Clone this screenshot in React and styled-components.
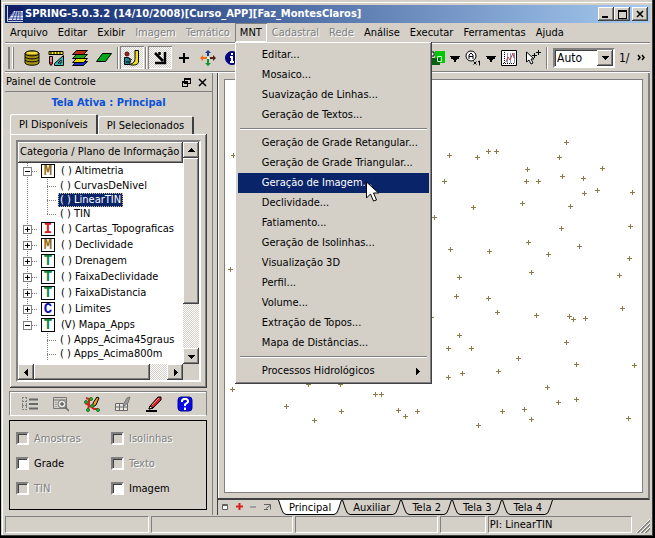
import React, { useState } from "react";
import styled, { createGlobalStyle, css } from "styled-components";

const face = "#d4d0c8";
const shade = "#808080";
const dark = "#404040";
const navy = "#0a246a";

const GlobalStyle = createGlobalStyle`
  * {
    box-sizing: border-box;
  }

  body {
    margin: 0;
    background: ${face};
    color: #000;
    font: 11px/14px "DejaVu Sans Condensed", "Liberation Sans", sans-serif;
  }

  button,
  select,
  input {
    margin: 0;
    padding: 0;
    border: 0;
    border-radius: 0;
    color: inherit;
    font: inherit;
    background: none;
  }

  ul {
    margin: 0;
    padding: 0;
    list-style: none;
  }

  svg {
    display: block;
    flex-shrink: 0;
  }
`;

const raised = css`
  background: ${face};
  box-shadow: inset -1px -1px ${dark}, inset 1px 1px #fff, inset -2px -2px ${shade};
`;

const sunken = css`
  border: 2px solid;
  border-color: ${shade} #fff #fff ${shade};
`;

const checker = css`
  background: repeating-conic-gradient(#fff 0 25%, ${face} 0 50%) 0 0 / 2px 2px;
`;

const disabledText = css`
  color: ${shade};
  text-shadow: 1px 1px #fff;
`;

const Window = styled.div`
  display: flex;
  flex-direction: column;
  height: 100vh;
  min-height: 530px;
  padding: 5px;
  overflow: hidden;
  background: ${face};
  box-shadow: inset 1px 0 #000, inset -2px -2px #000, inset -3px -3px ${dark},
    inset 2px 2px ${face}, inset 3px 3px #fff;
`;

const TitleBar = styled.header`
  display: flex;
  align-items: center;
  flex-shrink: 0;
  height: 18px;
  padding: 0 2px;
  gap: 2px;
  background: linear-gradient(90deg, ${navy}, #a6caf0);
  color: #fff;

  h1 {
    flex: 1;
    margin: 0;
    font-size: 11px;
    line-height: 16px;
    font-weight: bold;
    white-space: nowrap;
  }
`;

const WindowButtons = styled.div`
  display: flex;

  button:last-child {
    margin-left: 2px;
  }
`;

const WindowButton = styled.button`
  ${raised}
  display: flex;
  align-items: center;
  justify-content: center;
  width: 16px;
  height: 14px;
`;

const MenuBar = styled.nav`
  display: flex;
  flex-shrink: 0;
  height: 19px;
`;

const MenuEntry = styled.div`
  position: relative;
`;

const MenuTitle = styled.button`
  height: 19px;
  padding: 0 5px;
  white-space: nowrap;
  ${({ $open }) => $open && css`
    box-shadow: inset 1px 1px ${shade}, inset -1px -1px #fff;
  `}
  &:disabled {
    ${disabledText}
  }
`;

const Menu = styled.ul`
  ${raised}
  position: absolute;
  z-index: 5;
  top: 100%;
  left: 0;
  width: 197px;
  padding: 3px;
`;

const MenuItem = styled.button`
  display: flex;
  align-items: center;
  justify-content: space-between;
  width: 100%;
  height: 20px;
  padding: 0 8px 0 24px;
  text-align: left;
  white-space: nowrap;
  ${({ $active }) => $active && css`
    background: ${navy};
    color: #fff;
  `}
`;

const MenuRule = styled.li`
  height: 2px;
  margin: 3px 2px;
  border-top: 1px solid ${shade};
  border-bottom: 1px solid #fff;
`;

const Pointer = styled.svg`
  position: absolute;
  z-index: 6;
  top: 158px;
  left: 131px;
  pointer-events: none;
`;

const ToolBar = styled.div`
  display: flex;
  align-items: center;
  flex-shrink: 0;
  height: 31px;
  padding: 0 3px;
  border-top: 1px solid ${shade};
  border-bottom: 1px solid #fff;
  box-shadow: inset 0 1px #fff, inset 0 -1px ${shade};
`;

const Handle = styled.div`
  width: 6px;
  height: 22px;
  margin-right: 6px;
  border: solid;
  border-width: 0 1px;
  border-color: #fff ${shade};
  box-shadow: inset 1px 0 ${shade}, inset -1px 0 #fff;
`;

const Divider = styled.div`
  width: 2px;
  height: 22px;
  margin: 0 1px;
  border-left: 1px solid ${shade};
  border-right: 1px solid #fff;
`;

const ToolButton = styled.button`
  display: flex;
  align-items: center;
  justify-content: center;
  flex-shrink: 0;
  width: ${({ $narrow }) => ($narrow ? 12 : 24)}px;
  height: 23px;
  ${({ $pressed }) => $pressed && css`
    ${checker}
    box-shadow: inset 1px 1px ${shade}, inset -1px -1px #fff;
  `}
`;

const ToolEnd = styled.div`
  display: flex;
  align-items: center;
  margin-left: auto;
`;

const Combo = styled.label`
  ${sunken}
  display: flex;
  width: 62px;
  height: 20px;
  margin-left: 4px;
  background: #fff;
  box-shadow: inset 1px 1px ${dark};

  select {
    flex: 1;
    min-width: 0;
    padding: 0 2px;
    font-size: 12px;
    appearance: none;
  }
`;

const Arrow = styled.span`
  ${raised}
  display: flex;
  align-items: center;
  justify-content: center;
  width: 16px;
  height: 16px;
`;

const ScaleLabel = styled.span`
  width: 20px;
  padding-left: 4px;
  font-size: 12px;
`;

const Workspace = styled.main`
  display: flex;
  flex: 1;
  min-height: 0;
  gap: 4px;
`;

const Dock = styled.aside`
  display: flex;
  flex-direction: column;
  flex-shrink: 0;
  width: 208px;
  border-right: 1px solid ${shade};
`;

const DockHeader = styled.div`
  display: flex;
  align-items: center;
  height: 19px;
  padding: 0 3px 0 1px;
  gap: 3px;
  border-bottom: 1px solid ${shade};

  h2 {
    flex: 1;
    margin: 0;
    font-size: 11px;
    font-weight: normal;
  }

  button {
    padding: 2px;
  }
`;

const ActiveScreen = styled.h3`
  margin: 4px 0;
  color: #0a50d8;
  font-size: 11px;
  line-height: 14px;
  text-align: center;
`;

const DockTabs = styled.div`
  display: flex;
  align-items: flex-end;
  padding-left: 5px;
`;

const DockTab = styled.button`
  height: ${({ $active }) => ($active ? 20 : 18)}px;
  padding: 0 8px;
  border: 1px solid #fff;
  border-right: 2px solid ${dark};
  border-bottom: 0;
  border-radius: 3px 2px 0 0;
  white-space: nowrap;
`;

const Pane = styled.section`
  ${raised}
  display: flex;
  flex: 1;
  min-height: 0;
  margin: 0 5px;
  padding: 6px;
`;

/* tree list with its own pair of scroll bars */
const TreeBox = styled.div`
  ${sunken}
  display: grid;
  grid-template-columns: 1fr 16px;
  grid-template-rows: 1fr 16px;
  flex: 1;
  min-width: 0;
  background: ${face};
  box-shadow: inset 1px 1px ${dark};
`;

const TreeView = styled.div`
  min-width: 0;
  overflow: hidden;
  background: #fff;
  white-space: nowrap;
`;

const TreeHeader = styled.div`
  ${raised}
  height: 21px;
  padding: 0 2px;
  line-height: 20px;
`;

const TreeRow = styled.li`
  display: flex;
  align-items: center;
  height: ${({ $child }) => ($child ? 14 : 16)}px;

  span {
    padding: 0 2px;
    line-height: 14px;
    ${({ $selected }) => $selected && css`
      background: ${navy};
      color: #fff;
      outline: 1px dotted #d8c890;
      outline-offset: -1px;
    `}
  }
`;

const Badge = styled.b`
  width: 14px;
  height: 14px;
  margin: 0 4px 0 1px;
  border: 1px solid #000;
  color: ${({ $color }) => $color};
  font: bold 14px/13px "Liberation Mono", monospace;
  text-align: center;
`;

const ScrollBar = styled.div`
  ${checker}
  display: flex;
  flex-direction: ${({ $vertical }) => ($vertical ? "column" : "row")};
`;

const ScrollButton = styled.button`
  ${raised}
  display: flex;
  align-items: center;
  justify-content: center;
  flex-shrink: 0;
  width: 16px;
  height: 16px;
`;

const Thumb = styled.div`
  ${raised}
  flex: ${({ $size }) => $size};
`;

const Track = styled.div`
  flex: ${({ $size }) => $size};
`;

const LayerTools = styled.div`
  display: flex;
  align-items: center;
  height: 25px;
  margin: 3px 5px 4px 4px;
  padding: 0 4px;
  border: 1px solid ${shade};
  border-bottom-color: #fff;
  box-shadow: inset 1px 1px #fff;

  button {
    width: 31px;
    height: 20px;
    display: flex;
    align-items: center;
    justify-content: center;
  }
`;

const Options = styled.fieldset`
  display: grid;
  grid-template-columns: 95px 1fr;
  grid-auto-rows: 25px;
  flex-shrink: 0;
  height: 90px;
  margin: 0 5px 5px 4px;
  padding: 5px 6px;
  border: 1px solid #000;
`;

const Option = styled.label`
  display: flex;
  align-items: center;
  gap: 5px;
  ${({ $disabled }) => $disabled && disabledText}

  input {
    ${sunken}
    width: 13px;
    height: 13px;
    background: ${({ $disabled }) => ($disabled ? face : "#fff")};
    appearance: none;
    box-shadow: inset 1px 1px ${dark};
  }
`;

const Views = styled.section`
  display: flex;
  flex-direction: column;
  flex: 1;
  min-width: 0;
  border-left: 1px solid ${dark};
`;

const CanvasFrame = styled.div`
  display: flex;
  flex: 1;
  min-height: 0;
  padding: 6px 5px 5px 6px;
  border-right: 2px solid ${shade};
  border-bottom: 2px solid ${dark};
  box-shadow: inset 1px 0 #fff;
`;

const Canvas = styled.svg`
  flex: 1;
  min-width: 0;
  height: 100%;
  border: 1px solid ${shade};
  background: #fff;
`;

const ViewTabs = styled.div`
  display: flex;
  height: 15px;
  padding-left: 4px;
`;

const ViewTools = styled.div`
  display: flex;
  width: 56px;

  button {
    display: flex;
    align-items: center;
    width: 15px;
    height: 13px;
  }
`;

const ViewTab = styled.button`
  display: flex;
  height: 15px;
  line-height: 15px;
  white-space: nowrap;

  span {
    height: 15px;
    padding: 0 3px;
    border-bottom: 1px solid #000;
    background: ${({ $active }) => ($active ? "#fff" : face)};
  }
`;

const StatusBar = styled.footer`
  display: flex;
  flex-shrink: 0;
  height: 18px;
  padding-top: 1px;
  gap: 2px;
`;

const StatusCell = styled.div`
  flex: ${({ $size }) => $size};
  min-width: 0;
  height: 17px;
  padding: 0 1px;
  border: 1px solid;
  border-color: ${shade} #fff #fff ${shade};
  line-height: 15px;
  white-space: nowrap;
`;

const Grip = styled.svg`
  align-self: flex-end;
  margin-left: 2px;
`;

const menus = [
  ["Arquivo"], ["Editar"], ["Exibir"], ["Imagem", true], ["Temático", true], ["MNT"],
  ["Cadastral", true], ["Rede", true], ["Análise"], ["Executar"], ["Ferramentas"], ["Ajuda"],
];

const mntItems = [
  "Editar...", "Mosaico...", "Suavização de Linhas...", "Geração de Textos...", null,
  "Geração de Grade Retangular...", "Geração de Grade Triangular...", "Geração de Imagem...",
  "Declividade...", "Fatiamento...", "Geração de Isolinhas...", "Visualização 3D", "Perfil...",
  "Volume...", "Extração de Topos...", "Mapa de Distâncias...", null, "Processos Hidrológicos",
];

const tree = [
  { type: "M", name: "( ) Altimetria", open: true },
  { child: true, name: "( ) CurvasDeNivel" },
  { child: true, name: "( ) LinearTIN", selected: true },
  { child: true, name: "( ) TIN", last: true },
  { type: "I", name: "( ) Cartas_Topograficas" },
  { type: "M", name: "( ) Declividade" },
  { type: "T", name: "( ) Drenagem" },
  { type: "T", name: "( ) FaixaDeclividade" },
  { type: "T", name: "( ) FaixaDistancia" },
  { type: "C", name: "( ) Limites" },
  { type: "T", name: "(V) Mapa_Apps", open: true, end: true },
  { child: true, name: "( ) Apps_Acima45graus", end: true },
  { child: true, name: "( ) Apps_Acima800m", end: true },
];

const typeColors = { M: "#946a10", I: "#d82020", T: "#0c8a3c", C: "#1010b0" };

const options = [
  ["Amostras", true], ["Isolinhas", true], ["Grade", false],
  ["Texto", true], ["TIN", true], ["Imagem", false],
];

// sample points, in canvas pixels
const samples = [
  [341, 62], [263, 71], [271, 71], [224, 75], [252, 77], [334, 77], [302, 89], [377, 88],
  [219, 101], [301, 101], [313, 101], [337, 96], [358, 98], [359, 113], [372, 110], [407, 112],
  [248, 127], [297, 123], [345, 126], [209, 137], [336, 148], [405, 146], [303, 162], [354, 166],
  [225, 169], [264, 171], [323, 174], [404, 178], [234, 197], [306, 192], [394, 195], [231, 216],
  [263, 218], [272, 232], [311, 235], [344, 236], [348, 239], [360, 238], [397, 228], [206, 237],
  [234, 255], [223, 268], [246, 268], [341, 262], [293, 278], [351, 284], [409, 285], [273, 291],
  [237, 293], [223, 297], [322, 307], [333, 322], [351, 319], [277, 331], [299, 329], [306, 339],
  [253, 345], [403, 338], [7, 309], [83, 304], [115, 304], [61, 326], [89, 340], [116, 331],
  [150, 314], [156, 314], [173, 330], [180, 336], [192, 331], [8, 75], [5, 189],
];

const Triangle = ({ dir = "down", big }) => {
  const d = {
    down: "M0 2h7v1H6v1H5v1H4v1H3V5H2V4H1V3H0z",
    up: "M3 1h1v1h1v1h1v1h1v1H0V4h1V3h1V2h1z",
    left: "M4 0h1v7H4V6H3V5H2V4H1V3h1V2h1V1h1z",
    right: "M2 0h1v1h1v1h1v1h1v1H5v1H4v1H3v1H2z",
  }[dir];
  return (
    <svg width={big ? 10 : 7} height={big ? 10 : 7} viewBox="0 0 7 7" shapeRendering="crispEdges">
      <path d={d} fill="currentColor" />
    </svg>
  );
};

const Icon = ({ width = 16, height = 16, children }) => (
  <svg width={width} height={height} viewBox={`0 0 ${width} ${height}`} fill="none" stroke="#000">
    {children}
  </svg>
);

const LogoIcon = () => (
  <Icon>
    <path d="M0 0h16v16H0z" fill="#141c68" stroke="none" />
    <path d="M1 14 7 5h9v9z" fill="#e8ecf8" stroke="none" />
    <path d="M1 12h15M3 9h13M5 7h11M5 15l4-10M9 15l2-10M13 15V5" stroke="#3c4c98" />
    <path d="M.5 0v15.500H16" stroke="#c8d0e8" />
  </Icon>
);

const DatabaseIcon = () => (
  <Icon>
    <path d="M1 3v10c2 3 12 3 14 0V3c-2-3-12-3-14 0z" fill="#a89410" />
    <path d="M3 2h10v2H3z" fill="#e8d840" stroke="none" />
    <path d="M1 4c2 2.500 12 2.500 14 0M1 7c2 2.500 12 2.500 14 0M1 10c2 2.500 12 2.500 14 0" />
  </Icon>
);

const ProjectIcon = () => (
  <Icon>
    <path d="M1 1.500h14v3H1z" fill="#ffee00" />
    <path d="M3 2v2M6 2v2M9 2v2M12 2v2" />
    <path d="M1.500 6.500h3v7l-1.500 2-1.500-2z" fill="#c02020" />
    <path d="M3 7v5" stroke="#fff" />
    <path d="M6.500 15.500v-2l9-8v10z" fill="#30b8b8" />
    <path d="M10 13h3v-3z" fill="#fff" />
  </Icon>
);

const LayersIcon = () => (
  <Icon>
    <path d="M4.500 11.500h11l-4 4H.5z" fill="#1828c8" />
    <path d="M4.500 8.500h11l-4 4H.5z" fill="#e8d800" />
    <path d="M4.500 4.500h11l-4 4H.5z" fill="#20a020" />
    <path d="M4.500.5h11l-4 4H.5z" fill="#c02818" />
  </Icon>
);

const LayerIcon = () => (
  <Icon>
    <path d="M6.500 3.500h9l-6 8h-9z" fill="#00a818" />
  </Icon>
);

const PanelIcon = () => (
  <Icon>
    <path d="M11 .5h3.500v12c-1 3-7 3-9 2 4-1 6-3 5.500-8z" fill="#f0dc20" />
    <circle cx="3" cy="4" r="2" fill="#a02010" stroke="#501008" />
    <path d="M.5 7.500h4l2 3-1 4h-5z" fill="#188890" />
    <path d="M5 8l3 2M2 12h4" />
  </Icon>
);

const ArrowIcon = () => (
  <Icon>
    <path d="M3 3l8 8M13 2v11H3M7.500 2v3" strokeWidth="2.500" />
  </Icon>
);

const PlusIcon = () => (
  <Icon>
    <path d="M8 3v10M3 8h10" strokeWidth="2" shapeRendering="crispEdges" />
  </Icon>
);

const PanIcon = () => (
  <Icon>
    <g stroke="none">
      <path d="M8 0 5 3h2v3h2V3h2z" fill="#183888" />
      <path d="M16 8l-3-3v2h-3v2h3v2z" fill="#502018" />
      <path d="M8 16l-3-3h2v-4h2v4h2z" fill="#189030" />
      <path d="M0 8l3-3v2h4v2H3v2z" fill="#f06a10" />
      <path d="M7 7h2v2H7z" fill="#fff" />
    </g>
  </Icon>
);

const InfoIcon = () => (
  <Icon>
    <circle cx="8" cy="8" r="6.500" fill="#000080" stroke="#000080" />
    <path d="M8 3v2M6 7h2v5M6 12h4" stroke="#fff" strokeWidth="2" />
  </Icon>
);

const OverlayIcon = () => (
  <Icon>
    <path d="M0 2h5v4H0" fill="#fff" />
    <path d="M6 1h10v12H6z" fill="#00c808" stroke="none" />
    <path d="M2 8h9v7H2z" fill="#086010" stroke="none" />
    <path d="M8.500 6.500h4v5h-4z" stroke="#c8f8c8" />
  </Icon>
);

const ScaleIcon = () => (
  <Icon>
    <circle cx="6" cy="6" r="5" fill="#fff" />
    <path d="M4 9V5l2-2 2 2v4M4 6.500h4" />
    <path d="M8.500 11.500l3 3m0-3l-3 3M13 12l1.500-1v4.500" />
  </Icon>
);

const ChartIcon = () => (
  <Icon>
    <path d="M.5.5h15v15H.5z" fill="#fff" />
    <path d="M3.500 2v11M2 13.500h12" strokeDasharray="1 1" />
    <path d="M6.500 3v10M9.500 3v10M13.500 3v10" stroke="#8890c8" />
    <path d="M5 12l2-5 2 3 3-7 1 5" stroke="#b04848" />
  </Icon>
);

const SelectIcon = () => (
  <Icon>
    <path d="M1.500 2v10l2.500-2 2 4 2-1-2-4h3z" fill="#fff" />
    <path d="M7 5.500h5M9.500 3v5M11 2.500h5M13.500 0v5" />
  </Icon>
);

const layerIcons = [
  {
    label: "Lista",
    icon: (
      <Icon>
        <path d="M.5 1v13M4.500 1v13M0 1.500h5M0 5.500h5M0 9.500h5M0 13.500h5" stroke={shade} strokeDasharray="2 1" />
        <path d="M7 3.500h9M7 8h9M7 12.500h9" stroke="#686868" strokeWidth="2" />
      </Icon>
    ),
  },
  {
    label: "Consultar",
    icon: (
      <Icon>
        <path d="M.5 1.500h13v11H.5zM1 4h13" stroke="#787878" />
        <path d="M3 6v6" stroke="#787878" strokeDasharray="1 1" />
        <circle cx="9" cy="8" r="4" fill="#e8e6e0" stroke="#787878" />
        <path d="M7 8h4M9 6v4M12 11l4 4" stroke="#686868" strokeWidth="1.500" />
      </Icon>
    ),
  },
  {
    label: "Edição vetorial",
    icon: (
      <Icon>
        <path d="M2 2l3 1v6l5 4h4M1 7l4 2-1 5" stroke="#d82018" strokeWidth="2" />
        <path d="M9 7l4-6 2 1-3 7-3 2z" fill="#f0a020" />
        <g fill="#28b838" stroke="#187828">
          <circle cx="2" cy="6" r="1.500" />
          <circle cx="7" cy="3" r="1.500" />
          <circle cx="4" cy="14" r="1.500" />
          <circle cx="14" cy="14" r="1.500" />
          <circle cx="8" cy="10" r="1.500" />
        </g>
      </Icon>
    ),
  },
  {
    label: "Tabela",
    icon: (
      <Icon>
        <path d="M.5 7.500h12v7H.5zM0 11h13M4.500 8v7M8.500 8v7" stroke="#686868" fill="#e8e6e0" />
        <path d="M8 9l4-7 3-1-2 6-4 3z" fill="#989898" stroke="#787878" />
      </Icon>
    ),
  },
  {
    label: "Editar",
    icon: (
      <Icon>
        <path d="M4 10l8-9h3v3l-8 8-4 1z" fill="#d82028" />
        <path d="M4 10l3 2-4 1z" fill="#fff" />
        <path d="M6 9l7-7" stroke="#f09090" />
        <path d="M0 15h11" strokeWidth="2" />
      </Icon>
    ),
  },
  {
    label: "Ajuda",
    icon: (
      <Icon>
        <rect x="1" y="1" width="14" height="14" rx="3" fill="#0808e8" stroke="#000890" />
        <path d="M5 6V4.500L6.500 3h3L11 4.500V6L8 8.500V10M8 11.500V14" stroke="#fff" strokeWidth="2" />
      </Icon>
    ),
  },
];

const TreeLines = ({ row }) => {
  if (row.child) {
    return (
      <svg width="40" height="14" stroke={shade} strokeDasharray="1 1">
        {!row.end && <path d="M9.500 0v14" />}
        <path d={row.last ? "M29.500 0v7" : "M29.500 0v14"} />
        <path d="M29 7.500h9" />
      </svg>
    );
  }
  return (
    <svg width="22" height="16" fill="none" stroke={shade} shapeRendering="crispEdges">
      <path d={row.end ? "M9.500 0v8" : "M9.500 0v16"} strokeDasharray="1 1" />
      <path d="M14 8.500h6" strokeDasharray="1 1" />
      <path d="M5.500 4.500h8v8h-8z" fill="#fff" />
      <path d={row.open ? "M7 8.500h5" : "M7 8.500h5M9.500 6v5"} stroke="#000" />
    </svg>
  );
};

const TabEdge = ({ active, right }) => (
  <svg width="8" height="15" fill={active ? "#fff" : face} stroke="#000">
    <path d={right ? "M0 0h7.500L4.500 9Q3 14.500 0 14.500" : "M8 0H.5l3 9Q5 14.500 8 14.500"} stroke="none" />
    <path d={right ? "M7.500 0l-3 9Q3 14.500 0 14.500" : "M.5 0l3 9Q5 14.500 8 14.500"} fill="none" />
  </svg>
);

const MntMenu = () => (
  <>
    <Menu>
      {mntItems.map((item, index) =>
        item ? (
          <li key={item}>
            <MenuItem $active={item === "Geração de Imagem..."}>
              {item}
              {item === "Processos Hidrológicos" && <Triangle dir="right" />}
            </MenuItem>
          </li>
        ) : (
          <MenuRule key={index} />
        )
      )}
    </Menu>
    <Pointer width="13" height="22" fill="#fff" stroke="#000">
      <path d="M.5 1v16l4-4 3 7 3-1-3-7h5z" />
    </Pointer>
  </>
);

const ControlPanel = () => {
  const [checked, setChecked] = useState({});

  return (
    <Dock>
      <DockHeader>
        <h2>Painel de Controle</h2>
        <button aria-label="Destacar painel">
          <svg width="9" height="9" fill={face} stroke="#000" shapeRendering="crispEdges">
            <path d="M2.500.5h6v5h-6zM2 1.500h7M.5 3.500h5v5h-5zM0 4.500h6" />
          </svg>
        </button>
        <button aria-label="Fechar painel">
          <svg width="9" height="9" stroke="#000" strokeWidth="1.500">
            <path d="M1 1l7 7M8 1L1 8" />
          </svg>
        </button>
      </DockHeader>
      <ActiveScreen>Tela Ativa : Principal</ActiveScreen>
      <DockTabs>
        <DockTab $active>PI Disponíveis</DockTab>
        <DockTab>PI Selecionados</DockTab>
      </DockTabs>
      <Pane>
        <TreeBox>
          <TreeView>
            <TreeHeader>Categoria / Plano de Informação</TreeHeader>
            <ul>
              {tree.map((row) => (
                <TreeRow key={row.name} $child={row.child} $selected={row.selected}>
                  <TreeLines row={row} />
                  {row.type && <Badge $color={typeColors[row.type]}>{row.type}</Badge>}
                  <span>{row.name}</span>
                </TreeRow>
              ))}
            </ul>
          </TreeView>
          <ScrollBar $vertical>
            <ScrollButton aria-label="Subir"><Triangle dir="up" /></ScrollButton>
            <Thumb $size={145} />
            <Track $size={44} />
            <ScrollButton aria-label="Descer"><Triangle /></ScrollButton>
          </ScrollBar>
          <ScrollBar>
            <ScrollButton aria-label="Esquerda"><Triangle dir="left" /></ScrollButton>
            <Thumb $size={118} />
            <Track $size={17} />
            <ScrollButton aria-label="Direita"><Triangle dir="right" /></ScrollButton>
          </ScrollBar>
        </TreeBox>
      </Pane>
      <LayerTools>
        {layerIcons.map(({ label, icon }) => (
          <button key={label} aria-label={label}>{icon}</button>
        ))}
      </LayerTools>
      <Options>
        {options.map(([name, disabled]) => (
          <Option key={name} $disabled={disabled}>
            <input
              type="checkbox"
              disabled={disabled}
              checked={!!checked[name]}
              onChange={() => setChecked({ ...checked, [name]: !checked[name] })}
            />
            {name}
          </Option>
        ))}
      </Options>
    </Dock>
  );
};

const App = () => {
  const [view, setView] = useState("Principal");

  return (
    <Window>
      <GlobalStyle />
      <TitleBar>
        <LogoIcon />
        <h1>SPRING-5.0.3.2 (14/10/2008)[Curso_APP][Faz_MontesClaros]</h1>
        <WindowButtons>
          <WindowButton aria-label="Minimizar">
            <svg width="8" height="8"><path d="M0 6h6v2H0z" /></svg>
          </WindowButton>
          <WindowButton aria-label="Maximizar">
            <svg width="9" height="9" fill="none" stroke="#000" shapeRendering="crispEdges">
              <path d="M.5.5h8v8h-8zM0 1.500h9" />
            </svg>
          </WindowButton>
          <WindowButton aria-label="Fechar">
            <svg width="8" height="8" stroke="#000" strokeWidth="1.600"><path d="M1 1l6 6M7 1L1 7" /></svg>
          </WindowButton>
        </WindowButtons>
      </TitleBar>
      <MenuBar>
        {menus.map(([name, disabled]) => (
          <MenuEntry key={name}>
            <MenuTitle disabled={disabled} $open={name === "MNT"}>{name}</MenuTitle>
            {name === "MNT" && <MntMenu />}
          </MenuEntry>
        ))}
      </MenuBar>
      <ToolBar>
        <Handle />
        <ToolButton aria-label="Banco de dados"><DatabaseIcon /></ToolButton>
        <ToolButton aria-label="Projeto"><ProjectIcon /></ToolButton>
        <ToolButton aria-label="Modelo de dados"><LayersIcon /></ToolButton>
        <ToolButton aria-label="Plano de informação"><LayerIcon /></ToolButton>
        <Divider />
        <ToolButton aria-label="Painel de controle" $pressed><PanelIcon /></ToolButton>
        <Divider />
        <ToolButton aria-label="Cursor de área" $pressed><ArrowIcon /></ToolButton>
        <ToolButton aria-label="Cursor de ponto"><PlusIcon /></ToolButton>
        <ToolButton aria-label="Deslocar"><PanIcon /></ToolButton>
        <ToolButton aria-label="Informação"><InfoIcon /></ToolButton>
        <ToolEnd>
          <ToolButton aria-label="Acoplar"><OverlayIcon /></ToolButton>
          <ToolButton aria-label="Opções de acoplar" $narrow><Triangle big /></ToolButton>
          <ToolButton aria-label="Ampliação"><ScaleIcon /></ToolButton>
          <ToolButton aria-label="Opções de ampliação" $narrow><Triangle big /></ToolButton>
          <ToolButton aria-label="Gráfico"><ChartIcon /></ToolButton>
          <ToolButton aria-label="Selecionar pontos"><SelectIcon /></ToolButton>
          <Divider />
          <Combo>
            <select aria-label="Escala" defaultValue="Auto">
              <option>Auto</option>
            </select>
            <Arrow><Triangle /></Arrow>
          </Combo>
          <ScaleLabel>1/</ScaleLabel>
          <ToolButton aria-label="Mais ferramentas" $narrow>
            <svg width="8" height="7" fill="none" stroke="#000" strokeWidth="1.500">
              <path d="M1 1l2 2.500L1 6M5 1l2 2.500L5 6" />
            </svg>
          </ToolButton>
        </ToolEnd>
      </ToolBar>
      <Workspace>
        <ControlPanel />
        <Views>
          <CanvasFrame>
            <Canvas stroke="#8a7a4a" shapeRendering="crispEdges">
              {samples.map(([x, y]) => (
                <path key={`${x}-${y}`} d={`M${x - 2} ${y + 0.5}h5M${x + 0.5} ${y - 2}v5`} />
              ))}
            </Canvas>
          </CanvasFrame>
          <ViewTabs>
            <ViewTools>
              <button aria-label="Janela">
                <svg width="6" height="6" fill="#fff" stroke="#606060"><path d="M.5.5h5v5h-5zM0 1.500h6" /></svg>
              </button>
              <button aria-label="Adicionar tela">
                <svg width="7" height="7" stroke="#d82020" strokeWidth="2"><path d="M0 3.500h7M3.500 0v7" /></svg>
              </button>
              <button aria-label="Remover tela">
                <svg width="6" height="6" stroke="#a0a0a0" strokeWidth="2"><path d="M0 3h6" /></svg>
              </button>
              <button aria-label="Desacoplar tela">
                <svg width="7" height="6" fill="none" stroke="#606060"><path d="M0 .5h6.500v5M0 5.500h4M2 4.500l4-3" /></svg>
              </button>
            </ViewTools>
            {["Principal", "Auxiliar", "Tela 2", "Tela 3", "Tela 4"].map((name) => (
              <ViewTab key={name} $active={view === name} onClick={() => setView(name)}>
                <TabEdge active={view === name} />
                <span>{name}</span>
                <TabEdge active={view === name} right />
              </ViewTab>
            ))}
          </ViewTabs>
        </Views>
      </Workspace>
      <StatusBar>
        <StatusCell $size={146} />
        <StatusCell $size={144} />
        <StatusCell $size={144} />
        <StatusCell $size={44} />
        <StatusCell $size={146}>PI: LinearTIN</StatusCell>
        <Grip width="14" height="14" stroke={shade}>
          <path d="M1 14L14 1M5 14l9-9M9 14l5-5" strokeWidth="2" />
          <path d="M0 14L14 0M4 14L14 4M8 14l6-6" stroke="#fff" />
        </Grip>
      </StatusBar>
    </Window>
  );
};

export default App;
